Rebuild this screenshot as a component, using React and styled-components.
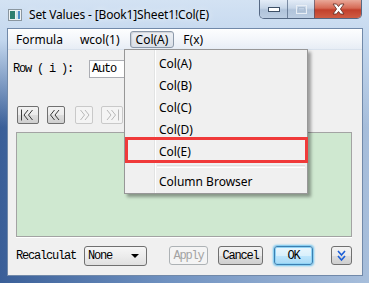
import React from "react";
import styled, { createGlobalStyle } from "styled-components";

const Global = createGlobalStyle`
  html, body {
    margin: 0;
    padding: 0;
    background: #ffffff;
  }
  body {
    font-family: "Noto Sans", "Open Sans", sans-serif;
  }
`;

const Window = styled.div`
  position: relative;
  width: 369px;
  height: 283px;
  box-sizing: border-box;
  display: flex;
  flex-direction: column;
  padding: 0 6px 7px 7px;
  overflow: hidden;
  background:
    linear-gradient(180deg, #d3e2f3 0%, #c3d7ee 14%, rgba(190, 210, 235, 0) 45%),
    linear-gradient(90deg, #3a5f98 0%, #6f91c0 45%, #a7bedb 100%);
`;

const TitleBar = styled.div`
  height: 28px;
  display: flex;
  align-items: center;
  flex-shrink: 0;
`;

const AppIcon = styled.svg`
  margin: 1px 0 0 1px;
  flex-shrink: 0;
`;

const Title = styled.div`
  margin-left: 7px;
  font-size: 12px;
  color: #000;
  letter-spacing: -0.15px;
  text-shadow: 0 0 6px rgba(255, 255, 255, 0.9);
  flex: 1;
  white-space: nowrap;
`;

const Caption = styled.div`
  align-self: flex-start;
  display: flex;
  height: 19px;
  margin-right: 1px;
  border: 1px solid rgba(45, 65, 95, 0.75);
  border-top: none;
  border-radius: 0 0 5px 5px;
  overflow: hidden;
  box-sizing: border-box;
`;

const CapButton = styled.div`
  width: ${(p) => p.$w}px;
  display: flex;
  align-items: center;
  justify-content: center;
  box-sizing: border-box;
  border-left: ${(p) => (p.$first ? "none" : "1px solid rgba(60, 80, 110, 0.6)")};
  background: ${(p) =>
    p.$close
      ? "linear-gradient(180deg, #e9a898 0%, #d66a55 45%, #c2402c 55%, #cf5d44 100%)"
      : "linear-gradient(180deg, #e3ecf7 0%, #c7d6e8 45%, #b0c3da 55%, #bccde2 100%)"};
`;

const Client = styled.div`
  flex: 1;
  display: flex;
  flex-direction: column;
  border: 1px solid #7189a9;
  background: #f0f0f0;
`;

const MenuBar = styled.div`
  height: 21px;
  box-sizing: border-box;
  display: flex;
  align-items: center;
  padding-left: 1px;
  background: linear-gradient(180deg, #fcfdfe 0%, #f3f6fa 50%, #e7edf5 100%);
  border-top: 1px solid #ffffff;
  border-bottom: 1px solid #d9e2ed;
`;

const MenuItem = styled.div`
  height: 17px;
  box-sizing: border-box;
  display: flex;
  align-items: center;
  padding: 0 ${(p) => p.$pad}px;
  margin-right: ${(p) => p.$mr}px;
  font-size: 12px;
  color: #000;
  border: 1px solid ${(p) => (p.$active ? "#8c99a9" : "transparent")};
  border-radius: 3px;
  background: ${(p) =>
    p.$active ? "linear-gradient(180deg, #eef1f5 0%, #d9dfe7 100%)" : "transparent"};
  box-shadow: ${(p) => (p.$active ? "inset 1px 1px 1px rgba(0,0,0,0.12)" : "none")};
`;

const Body = styled.div`
  flex: 1;
  display: flex;
  flex-direction: column;
`;

const Mono = styled.span`
  font-family: "Liberation Mono", "DejaVu Sans Mono", monospace;
  font-size: 12px;
  letter-spacing: -1.2px;
  color: ${(p) => p.$color || "#000"};
  white-space: nowrap;
`;

const FieldRow = styled.div`
  display: flex;
  align-items: center;
  height: 18px;
  margin: 10px 0 0 5px;
`;

const Label = styled(Mono)`
  width: ${(p) => p.$w}px;
  flex-shrink: 0;
`;

const TextBox = styled.div`
  width: 90px;
  height: 18px;
  box-sizing: border-box;
  border: 1px solid #abadb3;
  background: #fff;
  display: flex;
  align-items: center;
  padding-left: 2px;
`;

const NavRow = styled.div`
  display: flex;
  align-items: center;
  margin: 28px 0 0 9px;
`;

const NavButton = styled.div`
  width: ${(p) => p.$w}px;
  height: 18px;
  margin-left: ${(p) => p.$ml || 0}px;
  box-sizing: border-box;
  border: 1px solid ${(p) => (p.$off ? "#c9c9c9" : "#707070")};
  border-radius: 2px;
  background: ${(p) =>
    p.$off
      ? "#f4f4f4"
      : "linear-gradient(180deg, #f2f2f2 0%, #ebebeb 50%, #dddddd 51%, #cfcfcf 100%)"};
  display: flex;
  align-items: center;
  justify-content: center;
`;

const Plot = styled.div`
  height: 105px;
  margin: 8px 10px 0 8px;
  box-sizing: border-box;
  background: #cfe8d0;
  border: 1px solid #a3a3a3;
  box-shadow: 0 1px 0 #ffffff;
`;

const BottomRow = styled.div`
  display: flex;
  align-items: center;
  height: 19px;
  margin: 9px 0 0 8px;
`;

const Select = styled.div`
  width: 63px;
  height: 20px;
  box-sizing: border-box;
  border: 1px solid #707070;
  border-radius: 3px;
  background: linear-gradient(180deg, #f6f6f6 0%, #ececec 50%, #e0e0e0 100%);
  display: flex;
  align-items: center;
  justify-content: space-between;
  padding: 0 7px 0 3px;
`;

const Arrow = styled.div`
  width: 0;
  height: 0;
  border-left: 4px solid transparent;
  border-right: 4px solid transparent;
  border-top: 4px solid #000;
`;

const PushButton = styled.div`
  width: ${(p) => p.$w}px;
  height: 19px;
  margin-left: ${(p) => p.$ml}px;
  box-sizing: border-box;
  border-radius: 3px;
  display: flex;
  align-items: center;
  justify-content: center;
  border: 1px solid
    ${(p) => (p.$off ? "#adb2b5" : p.$focus ? "#3c7fb1" : "#707070")};
  background: ${(p) =>
    p.$off
      ? "#f4f4f4"
      : p.$focus
      ? "linear-gradient(180deg, #eaf6fd 0%, #d9f0fc 50%, #bee6fd 51%, #a7d9f5 100%)"
      : "linear-gradient(180deg, #f2f2f2 0%, #ebebeb 50%, #dddddd 51%, #cfcfcf 100%)"};
  box-shadow: ${(p) =>
    p.$focus ? "0 0 2px 1px rgba(90, 190, 240, 0.9), inset 0 0 0 1px #8fd3f5" : "none"};
`;

const Popup = styled.div`
  position: absolute;
  left: 124px;
  top: 49px;
  width: 184px;
  box-sizing: border-box;
  padding: 2px 2px 1px 2px;
  border: 1px solid #979797;
  background:
    linear-gradient(
      90deg,
      transparent 29px,
      #e2e3e3 29px,
      #e2e3e3 30px,
      #ffffff 30px,
      #ffffff 31px,
      transparent 31px
    ),
    #f0f0f0;
  box-shadow: 3px 3px 3px rgba(0, 0, 0, 0.35);
  display: flex;
  flex-direction: column;
`;

const PopupItem = styled.div`
  height: 22px;
  display: flex;
  align-items: center;
  padding-left: 32px;
  font-size: 12px;
  color: #000;
`;

const Separator = styled.div`
  height: 8px;
  display: flex;
  align-items: center;
  padding-left: 30px;

  &::after {
    content: "";
    flex: 1;
    height: 1px;
    border-top: 1px solid #e0e0e0;
    border-bottom: 1px solid #ffffff;
  }
`;

const Marker = styled.div`
  position: absolute;
  left: 0;
  top: 87px;
  width: 183px;
  height: 26px;
  box-sizing: border-box;
  border: 3px solid #f03a3a;
`;

function Chevrons({ dir, bar, color }) {
  const c = color;
  const left = dir === "left";
  return (
    <svg width="16" height="12" viewBox="0 0 16 12">
      {left ? (
        <>
          {bar && <line x1="1.5" y1="0.5" x2="1.5" y2="11.5" stroke={c} strokeWidth="1" />}
          <polyline points={bar ? "8,1 4,6 8,11" : "6.5,1 2.5,6 6.5,11"} fill="none" stroke={c} strokeWidth="1" />
          <polyline points={bar ? "12.5,1 8.5,6 12.5,11" : "11,1 7,6 11,11"} fill="none" stroke={c} strokeWidth="1" />
        </>
      ) : (
        <>
          <polyline points={bar ? "3,1 7,6 3,11" : "4.5,1 8.5,6 4.5,11"} fill="none" stroke={c} strokeWidth="1" />
          <polyline points={bar ? "7.5,1 11.5,6 7.5,11" : "9,1 13,6 9,11"} fill="none" stroke={c} strokeWidth="1" />
          {bar && <line x1="14.5" y1="0.5" x2="14.5" y2="11.5" stroke={c} strokeWidth="1" />}
        </>
      )}
    </svg>
  );
}

export default function App() {
  return (
    <>
      <Global />
      <Window>
        <TitleBar>
          <AppIcon width="14" height="12" viewBox="0 0 14 12">
            <rect x="0.5" y="0.5" width="13" height="11" fill="#eef2f4" stroke="#8a96a0" />
            <rect x="2" y="2" width="5" height="8" fill="#2f7f70" />
            <rect x="8" y="2" width="4" height="8" fill="#cfe3ea" />
            <rect x="10" y="2" width="2" height="8" fill="#4f8fc8" />
          </AppIcon>
          <Title>Set Values - [Book1]Sheet1!Col(E)</Title>
          <Caption>
            <CapButton $w={27} $first>
              <svg width="12" height="5" viewBox="0 0 12 5">
                <rect x="0.5" y="0.5" width="11" height="4" fill="#fff" stroke="#3d4f66" />
              </svg>
            </CapButton>
            <CapButton $w={27}>
              <svg width="11" height="9" viewBox="0 0 11 9">
                <rect x="0.5" y="0.5" width="10" height="8" fill="none" stroke="#e8eef5" />
                <rect x="2.5" y="2.5" width="6" height="4" fill="none" stroke="#aebfd3" />
              </svg>
            </CapButton>
            <CapButton $w={47} $close>
              <svg width="15" height="12" viewBox="0 0 15 12">
                <path
                  d="M2 1 L5.5 1 L7.5 3.6 L9.5 1 L13 1 L9.4 6 L13 11 L9.5 11 L7.5 8.4 L5.5 11 L2 11 L5.6 6 Z"
                  fill="#ffffff"
                  stroke="#5a2a22"
                  strokeWidth="0.8"
                />
              </svg>
            </CapButton>
          </Caption>
        </TitleBar>
        <Client>
          <MenuBar>
            <MenuItem $pad={6} $mr={3}>Formula</MenuItem>
            <MenuItem $pad={6} $mr={3}>wcol(1)</MenuItem>
            <MenuItem $pad={5} $mr={3} $active>Col(A)</MenuItem>
            <MenuItem $pad={5} $mr={0}>F(x)</MenuItem>
          </MenuBar>
          <Body>
            <FieldRow>
              <Label $w={76}>Row ( i ):</Label>
              <TextBox>
                <Mono>Auto</Mono>
              </TextBox>
            </FieldRow>
            <NavRow>
              <NavButton $w={22}>
                <Chevrons dir="left" bar color="#3a3a3a" />
              </NavButton>
              <NavButton $w={18} $ml={8}>
                <Chevrons dir="left" color="#3a3a3a" />
              </NavButton>
              <NavButton $w={18} $ml={10} $off>
                <Chevrons dir="right" color="#b8b8b8" />
              </NavButton>
              <NavButton $w={22} $ml={8} $off>
                <Chevrons dir="right" bar color="#b8b8b8" />
              </NavButton>
            </NavRow>
            <Plot />
            <BottomRow>
              <Label $w={68}>Recalculat</Label>
              <Select>
                <Mono>None</Mono>
                <Arrow />
              </Select>
              <PushButton $w={39} $ml={22} $off>
                <Mono $color="#a3a3a3">Apply</Mono>
              </PushButton>
              <PushButton $w={45} $ml={10}>
                <Mono>Cancel</Mono>
              </PushButton>
              <PushButton $w={39} $ml={11} $focus>
                <Mono>OK</Mono>
              </PushButton>
              <PushButton $w={21} $ml={18}>
                <svg width="9" height="12" viewBox="0 0 9 12">
                  <polyline points="1,1 4.5,5 8,1" fill="none" stroke="#1d5fd6" strokeWidth="1.6" />
                  <polyline points="1,6 4.5,10 8,6" fill="none" stroke="#1d5fd6" strokeWidth="1.6" />
                </svg>
              </PushButton>
            </BottomRow>
          </Body>
        </Client>
        <Popup>
          <PopupItem>Col(A)</PopupItem>
          <PopupItem>Col(B)</PopupItem>
          <PopupItem>Col(C)</PopupItem>
          <PopupItem>Col(D)</PopupItem>
          <PopupItem>Col(E)</PopupItem>
          <Separator />
          <PopupItem>Column Browser</PopupItem>
          <Marker />
        </Popup>
      </Window>
    </>
  );
}
